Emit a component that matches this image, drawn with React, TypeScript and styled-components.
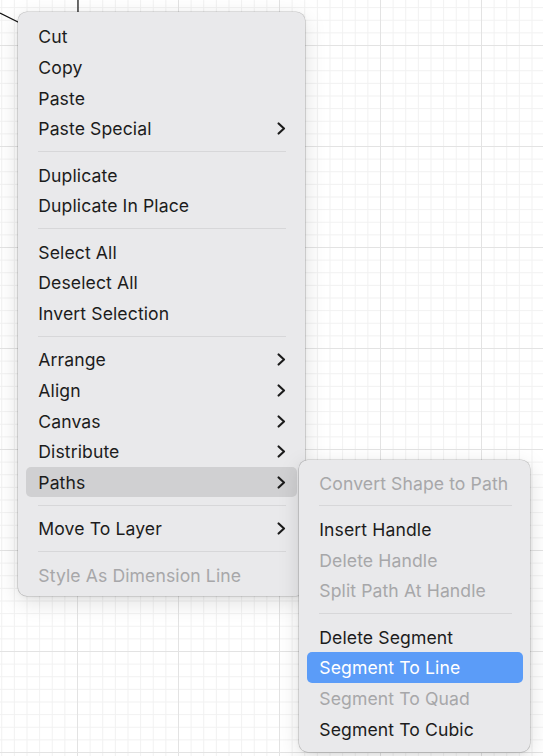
import React from "react";
import styled, { createGlobalStyle } from "styled-components";

const Global = createGlobalStyle`
  html, body { margin: 0; padding: 0; }
  body {
    width: 543px;
    height: 756px;
    overflow: hidden;
    font-family: Inter, "Noto Sans", "Liberation Sans", sans-serif;
    -webkit-font-smoothing: antialiased;
  }
`;

const Canvas = styled.div`
  position: relative;
  width: 543px;
  height: 756px;
  overflow: hidden;
  background-color: #ffffff;
  background-image:
    linear-gradient(to right, #e3e3e3 1px, transparent 1px),
    linear-gradient(to bottom, #e3e3e3 1px, transparent 1px),
    linear-gradient(to right, #f1f1f1 1px, transparent 1px),
    linear-gradient(to bottom, #f1f1f1 1px, transparent 1px);
  background-size: 101px 101px, 101px 101px, 12.625px 12.625px, 12.625px 12.625px;
  background-position: 77px 45px, 77px 45px, 77px 45px, 77px 45px;
`;

const Shape = styled.svg`
  position: absolute;
  left: 0;
  top: 0;
  width: 100px;
  height: 40px;
`;

const Menu = styled.div<{ $left: number; $top: number; $width: number; $padTop: number; $padBottom: number }>`
  position: absolute;
  left: ${(p) => p.$left}px;
  top: ${(p) => p.$top}px;
  width: ${(p) => p.$width}px;
  box-sizing: border-box;
  padding: ${(p) => p.$padTop}px 7.5px ${(p) => p.$padBottom}px;
  display: flex;
  flex-direction: column;
  background: #e9e9eb;
  border-radius: 9px;
  box-shadow:
    0 0 0 0.6px rgba(0, 0, 0, 0.2),
    0 6px 22px rgba(0, 0, 0, 0.13),
    0 1px 4px rgba(0, 0, 0, 0.06);
`;

const Item = styled.div<{ $state?: "normal" | "disabled" | "hover" | "active" }>`
  height: 30.7px;
  box-sizing: border-box;
  display: flex;
  align-items: center;
  justify-content: space-between;
  padding: 1px 11px 0 12.8px;
  border-radius: 5px;
  font-size: 17.6px;
  letter-spacing: 0.1px;
  white-space: nowrap;
  color: ${(p) =>
    p.$state === "disabled" ? "#a7a7a9" : p.$state === "active" ? "#ffffff" : "#1c1c1c"};
  background: ${(p) =>
    p.$state === "hover" ? "#d0d0d2" : p.$state === "active" ? "#5b9cf8" : "transparent"};
`;

const Separator = styled.div`
  height: 15.6px;
  display: flex;
  align-items: center;
  padding: 0 11px 0 12.5px;
  &::after {
    content: "";
    flex: 1;
    height: 1px;
    background: #d7d7d9;
  }
`;

const Chevron = styled.svg`
  width: 9px;
  height: 13px;
  flex: none;
`;

type Entry =
  | { kind: "sep" }
  | { kind: "item"; label: string; sub?: boolean; state?: "normal" | "disabled" | "hover" | "active" };

const mainItems: Entry[] = [
  { kind: "item", label: "Cut" },
  { kind: "item", label: "Copy" },
  { kind: "item", label: "Paste" },
  { kind: "item", label: "Paste Special", sub: true },
  { kind: "sep" },
  { kind: "item", label: "Duplicate" },
  { kind: "item", label: "Duplicate In Place" },
  { kind: "sep" },
  { kind: "item", label: "Select All" },
  { kind: "item", label: "Deselect All" },
  { kind: "item", label: "Invert Selection" },
  { kind: "sep" },
  { kind: "item", label: "Arrange", sub: true },
  { kind: "item", label: "Align", sub: true },
  { kind: "item", label: "Canvas", sub: true },
  { kind: "item", label: "Distribute", sub: true },
  { kind: "item", label: "Paths", sub: true, state: "hover" },
  { kind: "sep" },
  { kind: "item", label: "Move To Layer", sub: true },
  { kind: "sep" },
  { kind: "item", label: "Style As Dimension Line", state: "disabled" },
];

const subItems: Entry[] = [
  { kind: "item", label: "Convert Shape to Path", state: "disabled" },
  { kind: "sep" },
  { kind: "item", label: "Insert Handle" },
  { kind: "item", label: "Delete Handle", state: "disabled" },
  { kind: "item", label: "Split Path At Handle", state: "disabled" },
  { kind: "sep" },
  { kind: "item", label: "Delete Segment" },
  { kind: "item", label: "Segment To Line", state: "active" },
  { kind: "item", label: "Segment To Quad", state: "disabled" },
  { kind: "item", label: "Segment To Cubic" },
];

const ChevronIcon = () => (
  <Chevron viewBox="0 0 9 13">
    <polyline
      points="1.6,1.4 7,6.5 1.6,11.6"
      fill="none"
      stroke="#1b1b1b"
      strokeWidth="2.1"
      strokeLinecap="round"
      strokeLinejoin="round"
    />
  </Chevron>
);

const renderEntries = (entries: Entry[]) =>
  entries.map((e, i) =>
    e.kind === "sep" ? (
      <Separator key={i} />
    ) : (
      <Item key={i} $state={e.state}>
        <span>{e.label}</span>
        {e.sub && <ChevronIcon />}
      </Item>
    )
  );

export default function App() {
  return (
    <>
      <Global />
      <Canvas>
        <Shape viewBox="0 0 100 40">
          <line x1="78" y1="0" x2="78" y2="20" stroke="#111" strokeWidth="1.2" />
          <line x1="0" y1="13" x2="30" y2="28" stroke="#111" strokeWidth="1.2" />
        </Shape>
        <Menu $left={18} $top={12.3} $width={286.5} $padTop={8.6} $padBottom={6.6}>
          {renderEntries(mainItems)}
        </Menu>
        <Menu $left={299} $top={460} $width={231} $padTop={7.3} $padBottom={7.8}>
          {renderEntries(subItems)}
        </Menu>
      </Canvas>
    </>
  );
}
